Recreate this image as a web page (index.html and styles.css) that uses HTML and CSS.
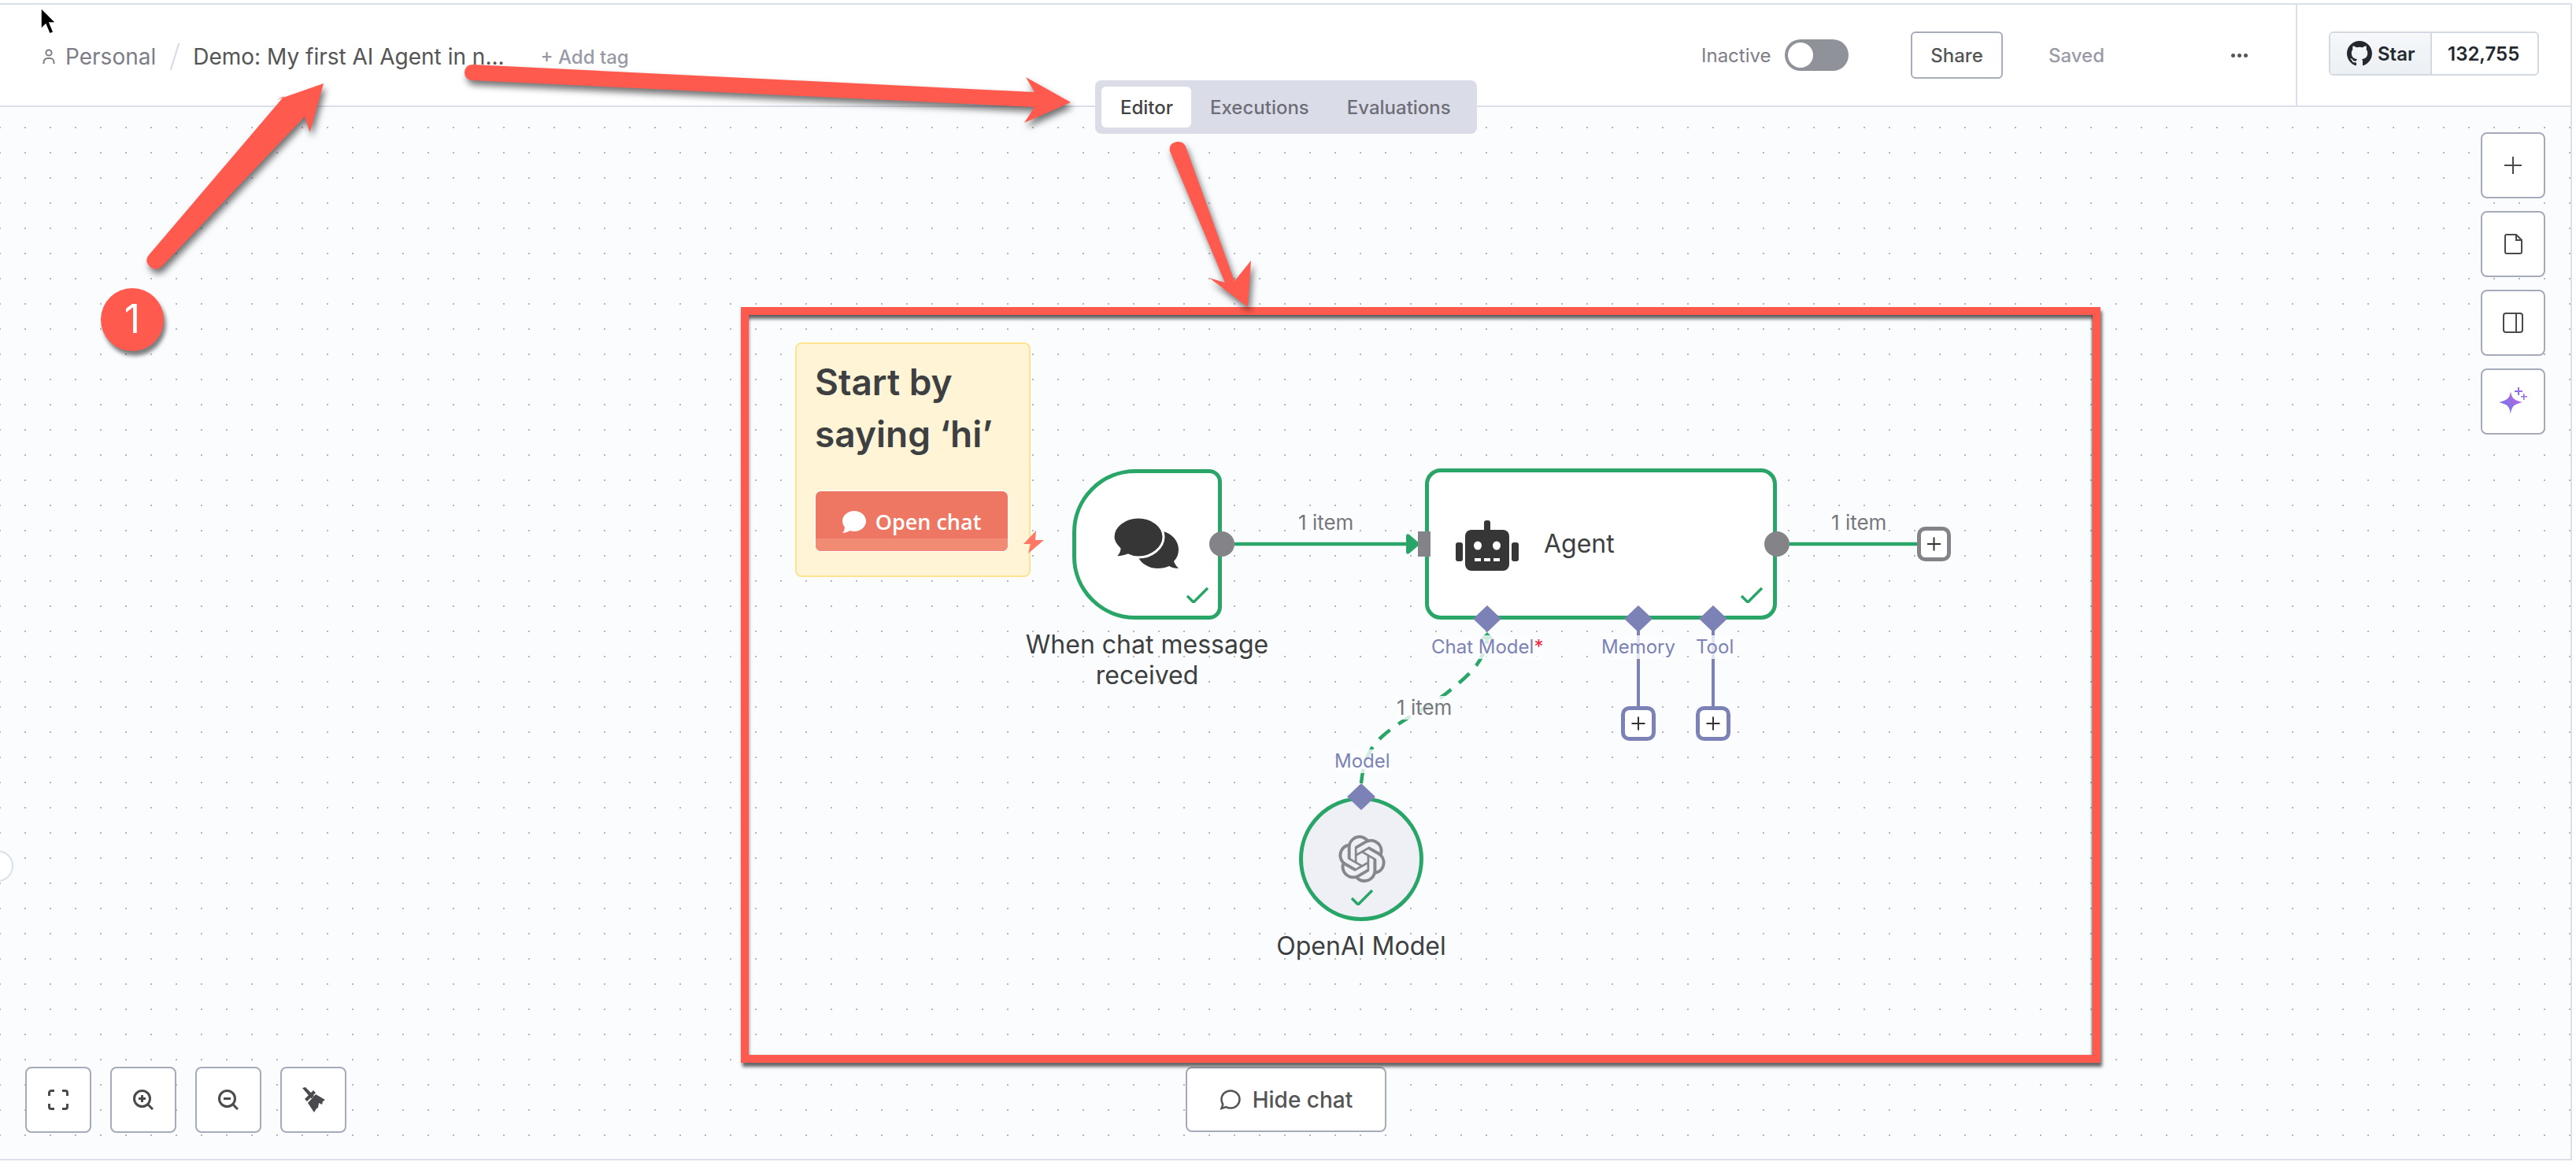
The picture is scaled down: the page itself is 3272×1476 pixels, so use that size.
FILE: index.html
```html
<!DOCTYPE html>
<html lang="en">
<head>
<meta charset="utf-8">
<title>Demo: My first AI Agent in n8n</title>
<link rel="stylesheet" href="styles.css">
</head>
<body>
<div class="app">
  <header class="topbar">
    <div class="crumbs">
      <svg class="person" viewBox="0 0 16 20"><circle cx="8" cy="5" r="3.6"/><path d="M1.5 19v-2a5 5 0 0 1 5-5h3a5 5 0 0 1 5 5v2"/></svg>
      <span class="crumb-project">Personal</span>
      <span class="crumb-slash"></span>
      <span class="crumb-title">Demo: My first AI Agent in n...</span>
      <span class="add-tag">+ Add tag</span>
    </div>
    <div class="actions">
      <span class="status">Inactive</span>
      <span class="toggle"><span class="knob"></span></span>
      <span class="share">Share</span>
      <span class="saved">Saved</span>
      <span class="more"><i></i><i></i><i></i></span>
    </div>
    <div class="github">
      <div class="gh-button">
        <span class="gh-star">
          <svg class="gh-icon" viewBox="0 0 16 16"><path d="M8 0C3.58 0 0 3.58 0 8c0 3.54 2.29 6.53 5.47 7.59.4.07.55-.17.55-.38 0-.19-.01-.82-.01-1.49-2.01.37-2.53-.49-2.69-.94-.09-.23-.48-.94-.82-1.13-.28-.15-.68-.52-.01-.53.63-.01 1.08.58 1.23.82.72 1.21 1.87.87 2.33.66.07-.52.28-.87.51-1.07-1.78-.2-3.64-.89-3.64-3.95 0-.87.31-1.59.82-2.15-.08-.2-.36-1.02.08-2.12 0 0 .67-.21 2.2.82.64-.18 1.32-.27 2-.27.68 0 1.36.09 2 .27 1.53-1.04 2.2-.82 2.2-.82.44 1.1.16 1.92.08 2.12.51.56.82 1.27.82 2.15 0 3.07-1.87 3.75-3.65 3.95.29.25.54.73.54 1.48 0 1.07-.01 1.93-.01 2.2 0 .21.15.46.55.38A8.013 8.013 0 0016 8c0-4.42-3.58-8-8-8z"/></svg>
          Star
        </span>
        <span class="gh-count">132,755</span>
      </div>
    </div>
  </header>

  <main class="canvas">
    <div class="side-handle"></div>

    <div class="right-tools">
      <button class="tool tool-tall"><svg class="ico" viewBox="0 0 28 28"><path d="M14 3v22M3 14h22"/></svg></button>
      <button class="tool tool-tall"><svg class="ico" viewBox="0 0 28 28"><path d="M4 4a2 2 0 0 1 2-2h12l7 7v15a2 2 0 0 1-2 2H6a2 2 0 0 1-2-2zM18 2v7h7"/></svg></button>
      <button class="tool tool-tall"><svg class="ico" viewBox="0 0 28 28"><rect x="2" y="2" width="24" height="24" rx="3"/><path d="M18 2v24"/></svg></button>
      <button class="tool tool-tall">
        <svg class="ico-spark" viewBox="0 0 36 36">
          <defs><linearGradient id="spark" x1="0" y1="1" x2="1" y2="0"><stop offset="0" stop-color="#5b7cf0"/><stop offset="1" stop-color="#d05fd8"/></linearGradient></defs>
          <path fill="url(#spark)" d="M15 5c1.5 9 3.5 11 15 14-11.500 3-13.500 5-15 15-1.500-10-3.500-12-15-15 11.500-3 13.500-5 15-14z"/>
          <path fill="url(#spark)" d="M24 0h2v4h4v2h-4v4h-2V6h-4V4h4zM31 8h1.500v3H36v1.500h-3.500V16H31v-3.500h-3V11h3z"/>
        </svg>
      </button>
    </div>

    <div class="bottom-tools">
      <button class="tool"><svg class="ico-sm" viewBox="0 0 26 26"><path d="M1.500 8V4a2.500 2.500 0 0 1 2.500-2.500h4M18 1.500h4A2.500 2.500 0 0 1 24.500 4v4M24.500 18v4a2.500 2.500 0 0 1-2.500 2.500h-4M8 24.500H4A2.500 2.500 0 0 1 1.500 22v-4"/></svg></button>
      <button class="tool"><svg class="ico-sm" viewBox="0 0 26 26"><circle cx="11.500" cy="11.500" r="10"/><path d="M19 19l6 6M11.500 7v9M7 11.500h9"/></svg></button>
      <button class="tool"><svg class="ico-sm" viewBox="0 0 26 26"><circle cx="11.500" cy="11.500" r="10"/><path d="M19 19l6 6M7 11.500h9"/></svg></button>
      <button class="tool"><svg class="ico-broom" viewBox="0 0 32 32"><path d="M2 1l4-1 11 11-3.500 3.500zM5 15l11-11 3 3L8 18z" fill="#4a4a4e"/><path d="M9 20L19 9l12 7-3 2-1 4-4-2-1 6-2 1-3 5z" fill="#4a4a4e"/></svg></button>
    </div>

    <button class="hide-chat">
      <svg class="bubble-outline" viewBox="0 0 28 28"><path d="M14 2.500c6.500 0 11.500 4.800 11.500 11s-5 11-11.500 11c-2.200 0-4-.5-5.700-1.400L2.500 25l1.800-5.200A10.800 10.800 0 0 1 2.500 13.500c0-6.200 5-11 11.500-11z"/></svg>
      Hide chat
    </button>
  </main>
</div>

<nav class="tabs">
  <span class="tab tab-active">Editor</span>
  <span class="tab">Executions</span>
  <span class="tab">Evaluations</span>
</nav>

<div class="diagram">
  <div class="sticky">
    <h2 class="sticky-title">Start by<br>saying ‘hi’</h2>
    <div class="sticky-btn">
      <span class="sticky-btn-main">
        <svg class="bubble-solid" viewBox="0 0 30 28"><path d="M15 0c8.300 0 15 5.800 15 13s-6.700 13-15 13c-2 0-3.700-.3-5.400-.9C7 26.800 3.500 28 0 28c2-1.500 3-4.500 2.800-7.500A12 12 0 0 1 0 13C0 5.800 6.700 0 15 0z"/></svg>
        Open chat
      </span>
      <span class="sticky-btn-foot"></span>
    </div>
  </div>

  <div class="node node-trigger">
    <svg class="chat-icon" viewBox="0 0 80 62">
      <path fill="#363636" d="M53 14c15 0 27 11 27 24 0 6-2 11-6 15 1 3 3 6 6 9-5 0-9-1-12-3-4 2-9 3-15 3-14 0-27-11-27-24S39 14 53 14z"/>
      <path fill="#363636" stroke="#fff" stroke-width="3" d="M29 -3c17 0 32 11 32 25S46 48 29 48c-5 0-9-1-13-3-5 2-12 3-18 3 4-3 7-7 7-11-4-4-8-9-8-15C-3 8 12 -3 29 -3z"/>
    </svg>
    <svg class="check check-trigger" viewBox="0 0 30 20"><path d="M2 11l8 8L28 1"/></svg>
  </div>
  <div class="node-label label-trigger">When chat message<br>received</div>

  <div class="node node-agent">
    <svg class="robot" viewBox="0 0 80 64">
      <rect x="36" y="0" width="8" height="14" rx="3" fill="#363636"/>
      <rect x="12" y="12" width="56" height="52" rx="8" fill="#363636"/>
      <rect x="0" y="28" width="9" height="24" rx="3" fill="#363636"/>
      <rect x="71" y="28" width="9" height="24" rx="3" fill="#363636"/>
      <ellipse cx="28" cy="32" rx="5" ry="5.500" fill="#fff"/>
      <ellipse cx="52" cy="32" rx="5" ry="5.500" fill="#fff"/>
      <rect x="24" y="48" width="8" height="4" fill="#fff"/><rect x="36" y="48" width="8" height="4" fill="#fff"/><rect x="48" y="48" width="8" height="4" fill="#fff"/>
    </svg>
    <span class="agent-name">Agent</span>
    <svg class="check check-agent" viewBox="0 0 30 20"><path d="M2 11l8 8L28 1"/></svg>
  </div>

  <div class="node node-model">
    <svg class="openai" viewBox="0 0 24 24"><path d="M22.2819 9.8211a5.9847 5.9847 0 0 0-.5157-4.9108 6.0462 6.0462 0 0 0-6.5098-2.9A6.0651 6.0651 0 0 0 4.9807 4.1818a5.9847 5.9847 0 0 0-3.9977 2.9 6.0462 6.0462 0 0 0 .7427 7.0966 5.98 5.98 0 0 0 .511 4.9107 6.051 6.051 0 0 0 6.5146 2.9001A5.9847 5.9847 0 0 0 13.2599 24a6.0557 6.0557 0 0 0 5.7718-4.2058 5.9894 5.9894 0 0 0 3.9977-2.9001 6.0557 6.0557 0 0 0-.7475-7.0729zm-9.022 12.6081a4.4755 4.4755 0 0 1-2.8764-1.0408l.1419-.0804 4.7783-2.7582a.7948.7948 0 0 0 .3927-.6813v-6.7369l2.02 1.1686a.071.071 0 0 1 .038.052v5.5826a4.504 4.504 0 0 1-4.4945 4.4944zm-9.6607-4.1254a4.4708 4.4708 0 0 1-.5346-3.0137l.142.0852 4.783 2.7582a.7712.7712 0 0 0 .7806 0l5.8428-3.3685v2.3324a.0804.0804 0 0 1-.0332.0615L9.74 19.9502a4.4992 4.4992 0 0 1-6.1408-1.6464zM2.3408 7.8956a4.485 4.485 0 0 1 2.3655-1.9728V11.6a.7664.7664 0 0 0 .3879.6765l5.8144 3.3543-2.0201 1.1685a.0757.0757 0 0 1-.071 0l-4.8303-2.7865A4.504 4.504 0 0 1 2.3408 7.872zm16.5963 3.8558L13.1038 8.364 15.1192 7.2a.0757.0757 0 0 1 .071 0l4.8303 2.7913a4.4944 4.4944 0 0 1-.6765 8.1042v-5.6772a.79.79 0 0 0-.407-.667zm2.0107-3.0231l-.142-.0852-4.7735-2.7818a.7759.7759 0 0 0-.7854 0L9.409 9.2297V6.8974a.0662.0662 0 0 1 .0284-.0615l4.8303-2.7866a4.4992 4.4992 0 0 1 6.6802 4.66zM8.3065 12.863l-2.02-1.1638a.0804.0804 0 0 1-.038-.0567V6.0742a4.4992 4.4992 0 0 1 7.3757-3.4537l-.142.0805L8.704 5.459a.7948.7948 0 0 0-.3927.6813zm1.0976-2.3654l2.602-1.4998 2.6069 1.4998v2.9994l-2.5974 1.5-2.6067-1.4997Z"/></svg>
    <svg class="check check-model" viewBox="0 0 30 20"><path d="M2 11l8 8L28 1"/></svg>
  </div>
  <div class="node-label label-model">OpenAI Model</div>

  <svg class="edges" viewBox="0 0 3272 1476">
    <path class="edge" d="M1568 691H1790"/>
    <path class="edge" d="M2273 691H2437"/>
    <path class="edge edge-dash" d="M1729 995C1732 960 1745 945 1755 936C1775 917 1815 898 1838 880C1862 860 1884 845 1889 812"/>
    <path class="edge-sub" d="M2081 790V898M2176 790V898"/>
    <path fill="#2aa568" d="M1786 681q0-4 4-2l14 12-14 12q-4 2-4-2z"/>
    <rect x="1801" y="675" width="16" height="32" fill="#848488"/>
    <ellipse cx="1552" cy="691" rx="16" ry="16" fill="#848488"/>
    <ellipse cx="2257" cy="691" rx="16" ry="16" fill="#848488"/>
    <g fill="#7c82b6">
      <path d="M1889 769l18 17-18 17-18-17z"/>
      <path d="M2081 769l18 17-18 17-18-17z"/>
      <path d="M2176 769l18 17-18 17-18-17z"/>
      <path d="M1729 995l18 17-18 17-18-17z"/>
    </g>
    <path fill="#2aa568" d="M1889 803l9 9h-18z"/>
    <g class="add-box add-main"><rect x="2437.500" y="671.500" width="38" height="39" rx="8"/></g>
    <g class="add-box add-sub"><rect x="2061.500" y="899.500" width="39" height="39" rx="8"/><rect x="2156.500" y="899.500" width="39" height="39" rx="8"/></g>
    <path class="add-plus" d="M2456.500 682.500v17M2448 691h17M2081 910.500v17M2072.500 919h17M2176 910.500v17M2167.500 919h17"/>
  </svg>

  <span class="edge-label el-1">1 item</span>
  <span class="edge-label el-2">1 item</span>
  <span class="edge-label el-3">1 item</span>
  <span class="port-label pl-chat">Chat Model<b class="req">*</b></span>
  <span class="port-label pl-memory">Memory</span>
  <span class="port-label pl-tool">Tool</span>
  <span class="port-label pl-model">Model</span>
  <svg class="bolt" viewBox="0 0 26 29"><path d="M16 0L0 17h9l-3 12 20-17H15z"/></svg>
</div>

<div class="red-frame"></div>
<svg class="annotations" viewBox="0 0 3272 1476">
  <path d="M189 324L361 122 351 127 411 106 393.500 168 387 148 207 337Q198 346 190 338 183 331 189 324z"/>
  <path d="M600 82L1314 117 1303 98 1360 130 1301 156 1314 136 599 102Q590 100 590 92 591 82 600 82z"/>
  <path d="M1506 186L1568 357 1589 331 1585 390 1536 353 1556 359 1486 192Q1484 182 1495 180 1503 179 1506 186z"/>
</svg>
<div class="badge">1</div>
<svg class="cursor" viewBox="0 0 22 36"><path d="M2 1v27l6-6 5 12 5-2-5-12h8z"/></svg>
</body>
</html>
```
FILE: styles.css
```css
* { box-sizing: border-box; }
html, body { margin: 0; height: 100%; }
body {
  position: relative;
  width: 3272px;
  height: 1476px;
  overflow: hidden;
  background: #fff;
  font-family: "Inter", "Liberation Sans", sans-serif;
  color: #555;
  padding: 4px 5px 2px 0;
}
button { font-family: inherit; }

.app {
  display: flex;
  flex-direction: column;
  height: 100%;
  border: solid #dbdfe9;
  border-width: 2px 2px 2px 0;
}

/* header */
.topbar {
  display: flex;
  align-items: stretch;
  height: 130px;
  flex: none;
  background: #fff;
  border-bottom: 2px solid #dbdfe9;
}
.crumbs {
  display: flex;
  align-items: center;
  padding-left: 54px;
  padding-top: 4px;
}
.person { width: 16px; height: 20px; fill: none; stroke: #7d7d87; stroke-width: 2; }
.crumb-project { margin-left: 13px; font-size: 28px; color: #7d7d87; }
.crumb-slash {
  width: 2px;
  height: 36px;
  margin: 0 22px 0 23px;
  background: #d5dae8;
  transform: rotate(17deg);
}
.crumb-title { font-size: 28px; color: #555; white-space: nowrap; }
.add-tag { margin-left: 46px; font-size: 24px; font-weight: 500; color: #9a9aa6; }

.actions {
  display: flex;
  align-items: center;
  margin-left: auto;
  width: 755px;
}
.status { font-size: 24px; color: #7d7d87; width: 106px; }
.toggle {
  width: 81px;
  height: 40px;
  padding: 4px;
  border-radius: 20px;
  background: #909299;
  display: flex;
}
.knob { width: 32px; height: 32px; border-radius: 50%; background: #fff; }
.share {
  margin-left: 79px;
  width: 117px;
  height: 60px;
  border: 2px solid #a8adbb;
  border-radius: 6px;
  display: flex;
  align-items: center;
  justify-content: center;
  font-size: 24px;
  font-weight: 500;
  color: #555;
}
.saved { margin-left: 58px; font-size: 24px; font-weight: 500; color: #9a9aa6; width: 232px; }
.more { display: flex; gap: 3px; }
.more i { width: 5px; height: 5px; border-radius: 50%; background: #555; }

.github {
  width: 349px;
  flex: none;
  border-left: 2px solid #dbdfe9;
  padding: 34px 0 0 40px;
}
.gh-button {
  display: flex;
  width: 267px;
  height: 56px;
  border: 2px solid #d2d9e1;
  border-radius: 6px;
  font-size: 24px;
  font-weight: 600;
  color: #24292f;
  overflow: hidden;
}
.gh-star {
  display: flex;
  align-items: center;
  gap: 7px;
  width: 129px;
  padding-left: 21px;
  background: linear-gradient(#f6f8fa, #ebf0f4);
  border-right: 2px solid #d2d9e1;
}
.gh-icon { width: 32px; height: 32px; fill: #24292f; }
.gh-count { display: flex; align-items: center; padding-left: 20px; }

/* tabs */
.tabs {
  position: absolute;
  left: 1391px;
  top: 102px;
  width: 485px;
  height: 68px;
  padding: 8px;
  display: flex;
  align-items: stretch;
  background: #dadde8;
  border-radius: 8px;
  font-size: 24px;
  font-weight: 500;
  color: #6e6e78;
}
.tab { display: flex; align-items: center; padding: 0 24px; }
.tab-active { width: 114px; background: #fff; border-radius: 6px; color: #444; }

/* canvas */
.canvas {
  flex: 1;
  position: relative;
  background-color: #fbfcfe;
  background-image: radial-gradient(circle at 1px 1px, #b4b6bd 1px, transparent 1.2px);
  background-size: 32px 32px;
  background-position: -1px 25px;
}
.side-handle {
  position: absolute;
  left: -23px;
  top: 944px;
  width: 40px;
  height: 40px;
  border-radius: 50%;
  border: 2px solid #dbdfe9;
  background: #fff;
}
.tool {
  width: 84px;
  height: 84px;
  padding: 0;
  background: #fff;
  border: 2px solid #a5abb9;
  border-radius: 8px;
  display: flex;
  align-items: center;
  justify-content: center;
}
.tool-tall { width: 82px; }
.right-tools {
  position: absolute;
  left: 3151px;
  top: 32px;
  display: flex;
  flex-direction: column;
  gap: 16px;
}
.bottom-tools {
  position: absolute;
  left: 32px;
  top: 1219px;
  display: flex;
  gap: 24px;
}
.ico { width: 28px; height: 28px; fill: none; stroke: #4a4a4e; stroke-width: 2; }
.ico-spark { width: 36px; height: 36px; }
.ico-sm { width: 26px; height: 26px; fill: none; stroke: #4a4a4e; stroke-width: 3; }
.ico-broom { width: 32px; height: 32px; }
.hide-chat {
  position: absolute;
  left: 1506px;
  top: 1219px;
  width: 255px;
  height: 83px;
  background: #fff;
  border: 2px solid #a5abb9;
  border-radius: 8px;
  display: flex;
  align-items: center;
  justify-content: center;
  gap: 14px;
  font-size: 28px;
  font-weight: 500;
  color: #555;
}
.bubble-outline { width: 28px; height: 28px; fill: none; stroke: #555; stroke-width: 2.500; }

/* diagram: nodes are placed freely on the canvas */
.diagram { position: absolute; inset: 0; }
.edges { position: absolute; left: 0; top: 0; width: 3272px; height: 1476px; }
.edge { fill: none; stroke: #2aa568; stroke-width: 4.500; }
.edge-dash { stroke-dasharray: 18 13; }
.edge-sub { fill: none; stroke: #7c82b6; stroke-width: 4; }
.add-box rect { fill: #fff; stroke-width: 5; }
.add-main rect { stroke: #848488; }
.add-sub rect { stroke: #7c82b6; }
.add-plus { fill: none; stroke: #333; stroke-width: 2; }

.sticky {
  position: absolute;
  left: 1010px;
  top: 435px;
  width: 299px;
  height: 298px;
  background: #fff5d6;
  border: 2px solid #fde48e;
  border-radius: 8px;
  padding: 15px 23px 0;
}
.sticky-title {
  margin: 0;
  font-size: 46px;
  line-height: 66px;
  font-weight: 600;
  color: #3d3f41;
}
.sticky-btn {
  margin-top: 39px;
  width: 246px;
  height: 78px;
  display: flex;
  flex-direction: column;
  background: #ee7763;
  border: 1px solid #fff;
  border-radius: 8px;
  overflow: hidden;
  font-family: "Open Sans", "Noto Sans", sans-serif;
  font-size: 27px;
  font-weight: 600;
  color: #fff;
}
.sticky-btn-main {
  display: flex;
  align-items: center;
  justify-content: center;
  gap: 12px;
  height: 60px;
  padding-top: 17px;
}
.sticky-btn-foot { flex: 1; background: #f28b73; }
.bubble-solid { width: 30px; height: 28px; fill: #fff; }

.bolt { position: absolute; left: 1300px; top: 674px; width: 26px; height: 29px; fill: #ff7a66; }

.node {
  position: absolute;
  border: 5px solid #2aa568;
  background: #fff;
}
.node-trigger {
  left: 1362px;
  top: 596px;
  width: 190px;
  height: 191px;
  border-radius: 80px 16px 16px 80px;
}
.chat-icon { position: absolute; left: 50px; top: 59px; width: 80px; height: 62px; overflow: visible; }
.check { position: absolute; width: 30px; height: 20px; fill: none; stroke: #2aa568; stroke-width: 3.500; }
.check-trigger { left: 139px; top: 145px; }
.node-agent {
  left: 1810px;
  top: 595px;
  width: 447px;
  height: 192px;
  border-radius: 20px;
  display: flex;
  align-items: center;
  padding-left: 34px;
}
.robot { width: 80px; height: 64px; margin-top: 3px; }
.agent-name { margin-left: 32px; font-size: 32px; font-weight: 400; color: #3d3f41; margin-top: -2px; }
.check-agent { left: 395px; top: 146px; }
.node-model {
  left: 1650px;
  top: 1012px;
  width: 158px;
  height: 158px;
  border-radius: 50%;
  background: #eff0f5;
}
.openai { position: absolute; left: 45px; top: 44px; width: 60px; height: 60px; fill: #86868e; }
.check-model { left: 60px; top: 113px; }

.node-label {
  position: absolute;
  text-align: center;
  font-size: 32px;
  line-height: 39px;
  color: #3d3f41;
  white-space: nowrap;
}
.label-trigger { left: 1257px; top: 799px; width: 400px; }
.label-model { left: 1529px; top: 1182px; width: 400px; }

.edge-label {
  position: absolute;
  font-size: 26px;
  line-height: 30px;
  color: #77777f;
  background: rgba(251, 252, 254, 0.8);
  border-radius: 4px;
}
.el-1 { left: 1649px; top: 649px; }
.el-2 { left: 2326px; top: 649px; }
.el-3 { left: 1774px; top: 884px; }
.port-label {
  position: absolute;
  font-size: 24px;
  line-height: 30px;
  color: #7c82b6;
  background: rgba(251, 252, 254, 0.8);
  white-space: nowrap;
}
.req { color: #f02040; font-weight: 400; }
.pl-chat { left: 1818px; top: 807px; }
.pl-memory { left: 2034px; top: 807px; }
.pl-tool { left: 2154px; top: 807px; }
.pl-model { left: 1695px; top: 952px; }

/* annotation layer */
.red-frame {
  position: absolute;
  left: 941px;
  top: 390px;
  width: 1727px;
  height: 960px;
  border: 10px solid #ff5a4d;
  box-shadow: 2px 5px 4px rgba(0, 0, 0, 0.6), inset 0 5px 4px rgba(0, 0, 0, 0.6), inset -1px 0 2px rgba(0, 0, 0, 0.3);
}
.annotations {
  position: absolute;
  left: 0;
  top: 0;
  width: 3272px;
  height: 1476px;
  fill: #ff5a4d;
  filter: drop-shadow(3px 6px 4px rgba(0, 0, 0, 0.55));
}
.badge {
  position: absolute;
  left: 128px;
  top: 366px;
  width: 80px;
  height: 80px;
  border-radius: 50%;
  background: #ff5a4d;
  box-shadow: 3px 6px 5px rgba(0, 0, 0, 0.5);
  font-family: "Inter", "Liberation Sans", sans-serif;
  font-size: 50px;
  font-weight: 400;
  line-height: 78px;
  text-align: center;
  color: #fff;
}
.cursor {
  position: absolute;
  left: 50px;
  top: 9px;
  width: 22px;
  height: 36px;
  fill: #000;
  stroke: #fff;
  stroke-width: 1.500;
}
```
